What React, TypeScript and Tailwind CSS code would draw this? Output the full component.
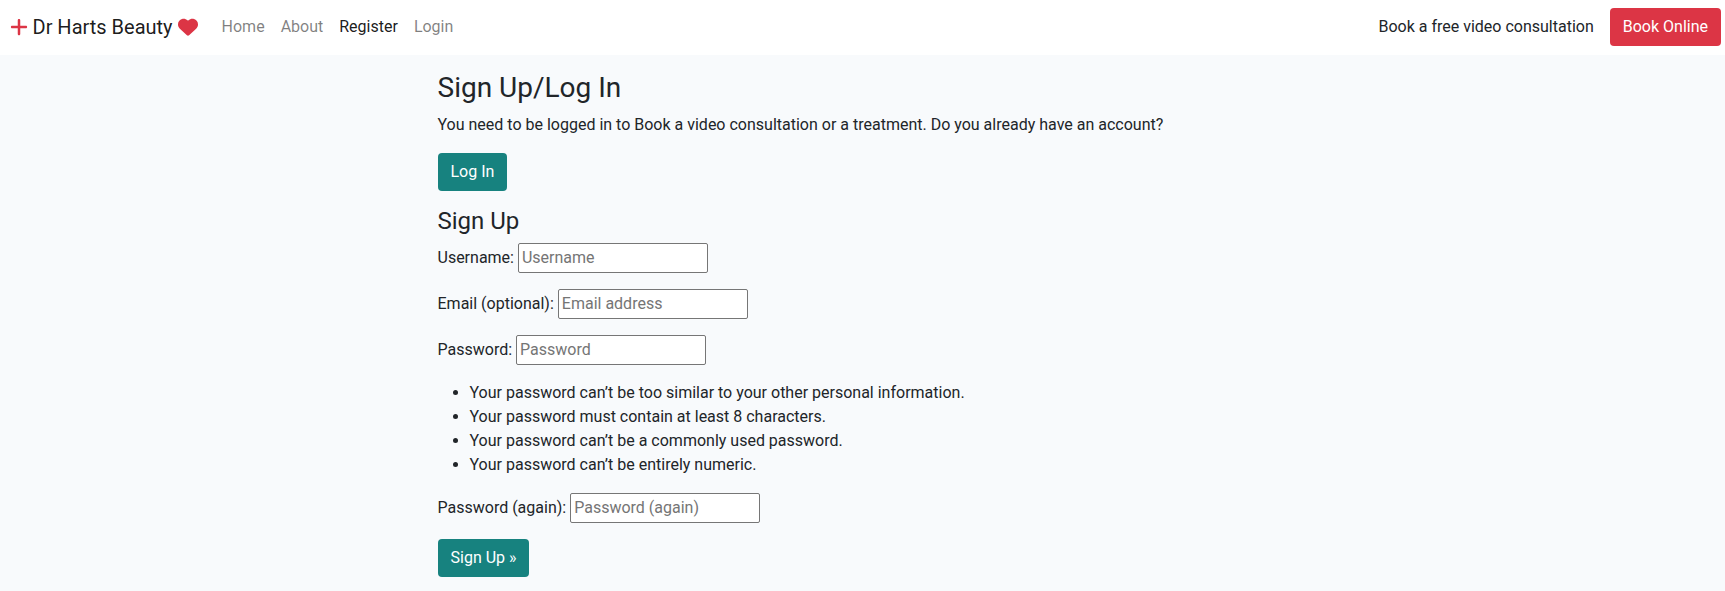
import React from "react";
import { FaHeart, FaPlus } from "react-icons/fa6";

const rules = [
  "Your password can’t be too similar to your other personal information.",
  "Your password must contain at least 8 characters.",
  "Your password can’t be a commonly used password.",
  "Your password can’t be entirely numeric.",
];

function Field({ label, placeholder, type = "text" }: { label: string; placeholder: string; type?: string }) {
  return (
    <p className="mb-4 flex h-[30px] items-baseline gap-1">
      <label>{label}</label>
      <input
        type={type}
        placeholder={placeholder}
        className="h-[30px] w-[190px] rounded-[2px] border border-[#767676] bg-white px-[3px] pt-px pb-[3px] placeholder:text-[#757575]"
      />
    </p>
  );
}

export default function App() {
  return (
    <div className="min-h-screen bg-[#f8fafc] font-[Roboto,sans-serif] text-base leading-6 text-[#212529]">
      <nav className="flex h-[55px] items-center bg-white pr-1 pb-px pl-[9px]">
        <a className="mr-4 flex items-center text-xl leading-[30px] text-black/90">
          <FaPlus className="mr-[3.5px] text-[#dc3545]" />
          Dr Harts Beauty
          <FaHeart className="ml-[5px] text-[#dc3545]" />
        </a>
        <div className="flex">
          <a className="px-2 text-black/50">Home</a>
          <a className="px-2 text-black/50">About</a>
          <a className="px-2 text-black/90">Register</a>
          <a className="px-2 text-black/50">Login</a>
        </div>
        <span className="mr-4 ml-auto">Book a free video consultation</span>
        <button className="h-[38px] rounded bg-[#dc3545] px-[13px] text-white">Book Online</button>
      </nav>
      <main className="ml-[437.5px] pt-4">
        <h1 className="mb-2 text-[28px] leading-[34px] font-normal">Sign Up/Log In</h1>
        <p className="mb-4">You need to be logged in to Book a video consultation or a treatment. Do you already have an account?</p>
        <button className="h-[38px] rounded bg-[#17827f] px-[13px] text-white">Log In</button>
        <h2 className="mt-4 mb-[7px] text-2xl leading-[29px] font-normal">Sign Up</h2>
        <form>
          <Field label="Username:" placeholder="Username" />
          <Field label="Email (optional):" placeholder="Email address" />
          <Field label="Password:" placeholder="Password" type="password" />
          <ul className="mb-4 list-disc pl-8">
            {rules.map((rule) => (
              <li key={rule}>{rule}</li>
            ))}
          </ul>
          <Field label="Password (again):" placeholder="Password (again)" type="password" />
          <button type="button" className="h-[38px] rounded bg-[#17827f] pr-3 pl-[13px] text-white">Sign Up »</button>
        </form>
      </main>
    </div>
  );
}
